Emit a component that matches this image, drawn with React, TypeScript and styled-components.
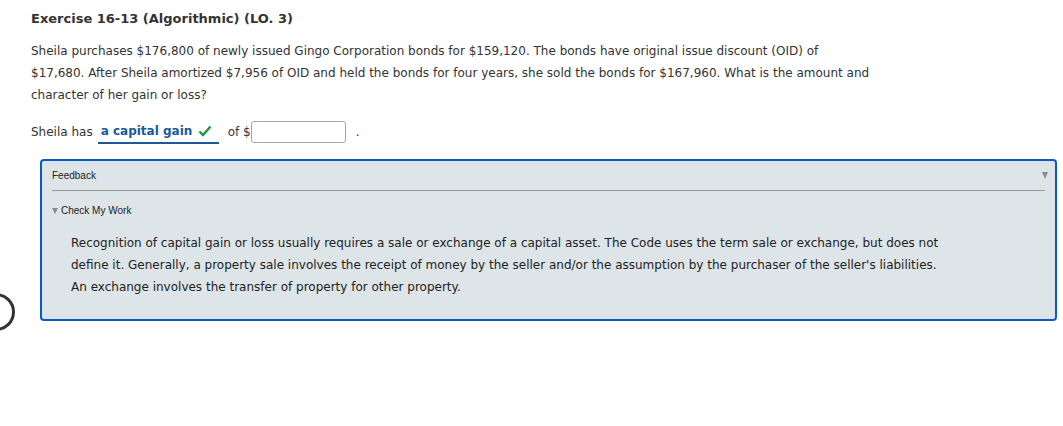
import React from 'react';
import styled, { createGlobalStyle } from 'styled-components';

const GlobalStyle = createGlobalStyle`
  html, body {
    margin: 0;
    padding: 0;
    background: #ffffff;
  }

  body {
    width: 1063px;
    height: 426px;
    overflow: hidden;
    font-family: Verdana, 'DejaVu Sans', sans-serif;
    color: #333333;
  }
`;

const Page = styled.div`
  position: relative;
  height: 426px;
  padding: 11px 6px 0 31px;
  box-sizing: border-box;
`;

const Title = styled.h1`
  margin: 0;
  font-size: 13px;
  line-height: 16px;
  font-weight: bold;
  color: #333333;
`;

const Question = styled.p`
  margin: 13px 0 0;
  font-size: 12px;
  line-height: 22px;
  max-width: 900px;
`;

const AnswerRow = styled.div`
  display: flex;
  align-items: center;
  margin-top: 14px;
  height: 24px;
  font-size: 12px;
`;

const Choice = styled.span`
  display: inline-flex;
  align-items: center;
  gap: 6px;
  margin-left: 5px;
  padding: 0 3px;
  height: 22px;
  border-bottom: 2px solid #1a5a96;
  color: #1a5a96;
  font-weight: bold;
  font-size: 12px;
  width: 115px;
  box-sizing: content-box;
`;

const OfLabel = styled.span`
  margin-left: 9px;
`;

const AmountInput = styled.span`
  display: inline-block;
  width: 93px;
  height: 20px;
  border: 1px solid #a5a5a5;
  border-radius: 3px;
  background: #ffffff;
`;

const Period = styled.span`
  margin-left: 10px;
`;

const FeedbackBox = styled.section`
  margin: 15px 0 0 9px;
  height: 162px;
  box-sizing: border-box;
  border: 2px solid #0b57d0;
  border-radius: 4px;
  background: #dde5e8;
  padding: 7px 10px 0 10px;
  font-family: 'Liberation Sans', Arial, sans-serif;
`;

const FeedbackHeader = styled.div`
  display: flex;
  justify-content: space-between;
  align-items: center;
  height: 15px;
  font-size: 10px;
  color: #222222;
  padding-bottom: 7px;
  border-bottom: 1px solid #9a9a9a;
`;

const Triangle = styled.span<{ size: number }>`
  display: inline-block;
  width: 0;
  height: 0;
  border-left: ${({ size }) => size / 2}px solid transparent;
  border-right: ${({ size }) => size / 2}px solid transparent;
  border-top: ${({ size }) => size}px solid #8a8a8a;
`;

const ToggleWrap = styled.span`
  margin-right: -3px;
  display: inline-flex;
`;

const CheckHeader = styled.div`
  display: flex;
  align-items: center;
  gap: 3px;
  margin-top: 14px;
  font-size: 10px;
  color: #222222;
`;

const FeedbackText = styled.p`
  margin: 16px 0 0 19px;
  font-family: Verdana, 'DejaVu Sans', sans-serif;
  font-size: 12px;
  line-height: 22px;
  color: #222222;
  max-width: 880px;
`;

const EdgeCircle = styled.div`
  position: absolute;
  left: -23px;
  top: 293px;
  width: 32px;
  height: 32px;
  border: 3px solid #333333;
  border-radius: 50%;
`;

const Check = () => (
  <svg width="14" height="12" viewBox="0 0 14 12">
    <path d="M1.5 6.5 L5 10 L12.5 1.5" fill="none" stroke="#1a9a3a" strokeWidth="2.4" />
  </svg>
);

export default function App() {
  return (
    <>
      <GlobalStyle />
      <Page>
        <Title>Exercise 16-13 (Algorithmic) (LO. 3)</Title>
        <Question>
          Sheila purchases $176,800 of newly issued Gingo Corporation bonds for $159,120. The bonds have original issue
          discount (OID) of
          <br />
          $17,680. After Sheila amortized $7,956 of OID and held the bonds for four years, she sold the bonds for
          $167,960. What is the amount and
          <br />
          character of her gain or loss?
        </Question>
        <AnswerRow>
          <span>Sheila has</span>
          <Choice>
            a capital gain <Check />
          </Choice>
          <OfLabel>of $</OfLabel>
          <AmountInput />
          <Period>.</Period>
        </AnswerRow>
        <FeedbackBox>
          <FeedbackHeader>
            <span>Feedback</span>
            <ToggleWrap>
              <Triangle size={7} />
            </ToggleWrap>
          </FeedbackHeader>
          <CheckHeader>
            <Triangle size={6} />
            <span>Check My Work</span>
          </CheckHeader>
          <FeedbackText>
            Recognition of capital gain or loss usually requires a sale or exchange of a capital asset. The Code uses the
            term sale or exchange, but does not define it. Generally, a property sale involves the receipt of money by the
            seller and/or the assumption by the purchaser of the seller's liabilities. An exchange involves the transfer of
            property for other property.
          </FeedbackText>
        </FeedbackBox>
        <EdgeCircle />
      </Page>
    </>
  );
}
